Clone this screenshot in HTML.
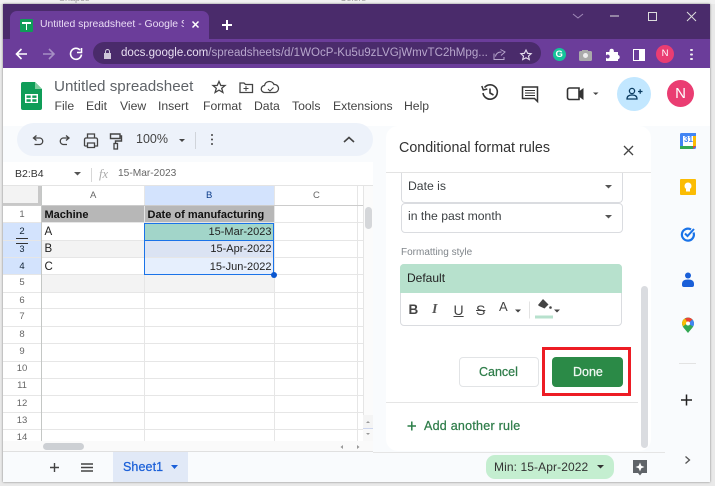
<!DOCTYPE html>
<html><head><meta charset="utf-8"><style>
html,body{margin:0;padding:0}
body{width:715px;height:486px;overflow:hidden;position:relative;background:#e9e9e9;font-family:"Liberation Sans",sans-serif;color:#3c4043}
.a{position:absolute}
.t{position:absolute;white-space:nowrap;line-height:1}
.h{position:absolute;background:#e6e6e6}
.rn{position:absolute;left:3px;width:38px;text-align:center;font-size:9.5px;color:#666;line-height:17px;height:17px}
.cell{position:absolute;font-size:11px;line-height:17px;height:17px;white-space:nowrap;color:#222}
.m{-webkit-text-stroke:.25px currentColor}
svg{position:absolute;overflow:visible}
</style></head><body>
<div class="a" style="left:0;top:0;width:715px;height:4px;background:#f1f1f1"></div>
<div class="t" style="left:59px;top:-6px;font-size:9px;color:#999">Shapes</div>
<div class="t" style="left:340px;top:-6px;font-size:9px;color:#999">Colors</div>
<div class="a" style="left:3px;top:4px;width:707px;height:478px;background:#f9fbfd;box-shadow:0 0 2px #777"></div>
<!-- tab strip -->
<div class="a" style="left:3px;top:4px;width:707px;height:35px;background:#4a2b6b"></div>
<div class="a" style="left:10px;top:11px;width:199px;height:28px;background:#6b3d9a;border-radius:7px 7px 0 0"></div>
<div class="a" style="left:20px;top:19px;width:13px;height:13px;background:#0f9d58;border-radius:1px"></div>
<div class="a" style="left:22px;top:22px;width:9px;height:1.5px;background:#fff"></div>
<div class="a" style="left:25.5px;top:22px;width:1.5px;height:8px;background:#fff"></div>
<div class="t" style="left:40px;top:20px;font-size:10.4px;color:#eadcf5;width:144px;overflow:hidden">Untitled spreadsheet - Google Sh</div>
<svg style="left:0;top:0" width="715" height="70" fill="none" stroke="#fff" stroke-width="1.5">
<path d="M192.500 21.500l6 6M198.500 21.500l-6 6"/>
<path d="M222 25h10M227 20v10" stroke-width="2"/>
<path d="M573 14l5 4 5-4" stroke="#a08ab8" stroke-width="1"/>
<path d="M610 16h9" stroke="#ddd" stroke-width="1"/>
<rect x="648.500" y="12.500" width="8" height="8" stroke="#ddd" stroke-width="1"/>
<path d="M687 12l9 9M696 12l-9 9" stroke="#ddd" stroke-width="1"/>
</svg>
<!-- toolbar -->
<div class="a" style="left:3px;top:39px;width:707px;height:29px;background:#6b3d9a"></div>
<div class="a" style="left:93px;top:42px;width:448px;height:22px;background:#4a2b6b;border-radius:11px"></div>
<svg style="left:0;top:0" width="715" height="70" fill="none" stroke="#fff" stroke-width="1.600">
<path d="M27 54H17M21.500 49l-5 5 5 5"/>
<path d="M43 54h10M49 49l5 5-5 5" stroke="#a68fc4"/>
<path d="M80 50a5.500 5.500 0 1 0 1.500 4.500M81.500 48v4.500H77"/>
<rect x="104" y="53" width="7" height="6" fill="#cfc6da" stroke="none"/>
<path d="M105.500 53v-1.500a2 2 0 0 1 4 0V53" stroke="#cfc6da" stroke-width="1"/>
<path d="M494 53.500v6h10v-2.500M495.500 56.500c.5-3 2.500-4.500 6-4.500M500.500 49.500l4.500 2.500-4 3.500" stroke="#b7a6cc" stroke-width="1"/>
<path d="M526 50l1.600 3.300 3.600.4-2.700 2.400.8 3.500-3.300-1.800-3.300 1.800.8-3.500-2.700-2.400 3.600-.4z" stroke="#e8e0f0" stroke-width="1.100"/>
</svg>
<div class="t" style="left:121px;top:48px;font-size:11.550px;color:#e8dff2">docs.google.com<span style="color:#b7a6cc">/spreadsheets/d/1WOcP-Ku5u9zLVGjWmvTC2hMpg...</span></div>
<div class="a" style="left:552.500px;top:47.500px;width:13px;height:13px;border-radius:50%;background:#15c39a"></div>
<div class="t" style="left:555.500px;top:49.500px;font-size:9.500px;font-weight:bold;color:#fff">G</div>
<div class="a" style="left:579px;top:51px;width:13px;height:9.500px;background:#aaa;border-radius:1.500px"></div>
<div class="a" style="left:582px;top:49.500px;width:6px;height:2px;background:#aaa"></div>
<div class="a" style="left:583px;top:53px;width:5px;height:5px;background:#eee;border-radius:50%"></div>
<svg style="left:606px;top:48px" width="14" height="13"><path d="M0 4h3.500a2 2 0 0 1 0-1.500 2.200 2.200 0 0 1 4.300 0 2 2 0 0 1 0 1.500H12v3a2.200 2.200 0 0 1 0 4.300V13H0V9.500a2 2 0 1 0 0-2z" fill="#fff"/></svg>
<div class="a" style="left:633px;top:49px;width:12px;height:11.500px;border:1.300px solid #fff;background:linear-gradient(90deg,#6b3d9a 50%,#fff 50%);box-sizing:border-box"></div>
<div class="a" style="left:656px;top:45px;width:18px;height:18px;border-radius:50%;background:#ea3d72;color:#fff;font-size:9.500px;line-height:18px;text-align:center">N</div>
<div class="a" style="left:690px;top:48.500px;width:2.500px;height:2.500px;background:#eee;border-radius:50%;box-shadow:0 4.500px 0 #eee,0 9px 0 #eee"></div>
<!-- docs header -->
<div class="a" style="left:3px;top:68px;width:707px;height:58px;background:#fff"></div>
<svg style="left:21px;top:82px" width="21" height="28"><path d="M2 0h12l7 7v19a2 2 0 0 1-2 2H2a2 2 0 0 1-2-2V2a2 2 0 0 1 2-2z" fill="#0f9d58"/><path d="M14 0v7h7z" fill="#7fce9f"/><path d="M4 12h13v9H4z" fill="#fff"/><path d="M5.500 13.500h4.200v2.400H5.500zM11.300 13.500h4.200v2.400h-4.200zM5.500 17.300h4.200v2.400H5.500zM11.300 17.300h4.200v2.400h-4.200z" fill="#0f9d58"/></svg>
<div class="t" style="left:54px;top:79px;font-size:15.200px;color:#5f6368">Untitled spreadsheet</div>
<div class="t" style="left:54.500px;top:100px;font-size:12.200px;color:#444">File</div>
<div class="t" style="left:86px;top:100px;font-size:12.200px;color:#444">Edit</div>
<div class="t" style="left:120px;top:100px;font-size:12.200px;color:#444">View</div>
<div class="t" style="left:158px;top:100px;font-size:12.200px;color:#444">Insert</div>
<div class="t" style="left:203px;top:100px;font-size:12.200px;color:#444">Format</div>
<div class="t" style="left:254px;top:100px;font-size:12.200px;color:#444">Data</div>
<div class="t" style="left:292px;top:100px;font-size:12.200px;color:#444">Tools</div>
<div class="t" style="left:333px;top:100px;font-size:12.200px;color:#444">Extensions</div>
<div class="t" style="left:404px;top:100px;font-size:12.200px;color:#444">Help</div>
<svg style="left:0;top:0" width="715" height="130" fill="none" stroke="#444" stroke-width="1.300">
<path d="M219 81.500l1.800 4h4.200l-3.300 2.800 1.200 4.200-3.900-2.400-3.900 2.400 1.200-4.200-3.300-2.800h4.200z"/>
<path d="M240 92.500V83h4l1.500 1.500H252.500v8z"/><path d="M243.500 88.500h5M246 86v5" stroke-width="1"/>
<path d="M269 92.500h-4a3.500 3.500 0 0 1-.5-7 5 5 0 0 1 9.500-1 4 4 0 0 1 1 8z"/><path d="M268 89l2 2 3.500-3.500" stroke-width="1"/>
<path d="M484.500 87.500A7.200 7.200 0 1 1 483 93" stroke="#333" stroke-width="1.600"/><path d="M481.800 86l1.500 4 4-1" stroke="#333" stroke-width="1.500"/><path d="M490 88.500v4.500l3.500 2" stroke="#333" stroke-width="1.600"/>
<path d="M522.500 87h15v14.500l-3-3h-12z" stroke="#333" stroke-width="1.500"/><path d="M525 90.500h10M525 93h10M525 95.500h10" stroke="#333" stroke-width="1.100"/>
<path d="M567.500 90a2 2 0 0 1 2-2h9.500v11.500h-9.500a2 2 0 0 1-2-2z" stroke="#333" stroke-width="1.600"/><path d="M579 92l4-3v10l-4-3z" fill="#333" stroke="#333" stroke-width="1"/>
<path d="M593 92.500h5.500l-2.750 2.500z" fill="#444" stroke="none"/>
</svg>
<div class="a" style="left:617px;top:77px;width:34px;height:34px;border-radius:50%;background:#c2e7ff"></div>
<svg style="left:626px;top:87px" width="17" height="14" fill="none" stroke="#0b3c61" stroke-width="1.300"><circle cx="6" cy="4" r="2.600"/><path d="M1 12c0-3 2-4 5-4s5 1 5 4z"/><path d="M12 4.500h4.500M14.200 2.200v4.600"/></svg>
<div class="a" style="left:667px;top:80px;width:27px;height:27px;border-radius:50%;background:#ea3d72;color:#fff;font-size:15px;line-height:27px;text-align:center">N</div>
<!-- format toolbar -->
<div class="a" style="left:17px;top:123px;width:356px;height:33px;border-radius:17px;background:#edf2fa"></div>
<svg style="left:0;top:120px" width="380" height="40" fill="none" stroke="#444" stroke-width="1.300">
<path d="M36.500 15.500L33.500 18l3 2.500M33.500 18H40a3.300 3.300 0 0 1 0 6.500H34.500"/>
<path d="M66 15.500l3 2.500-3 2.500M69 18H63a3.300 3.300 0 0 0 0 6.500H67"/>
<path d="M84.500 26v-6.500a1.500 1.500 0 0 1 1.500-1.500h10a1.500 1.500 0 0 1 1.500 1.500V26h-2.500M87 26h-2.500M87.500 18v-4h7v4M87.500 23h7v4.500h-7z"/>
<path d="M110.500 14h9.500v4.500h-9.500zM120 16h1.500v5h-6v2.500" stroke-width="1.400"/><rect x="114" y="23.500" width="3.500" height="5.500" stroke-width="1.300"/>
<path d="M179 19h6l-3 3z" fill="#444" stroke="none"/>
<path d="M195.500 12v17" stroke="#d0d4da" stroke-width="1"/>
<path d="M344 22l5-4.500 5 4.500" stroke-width="1.600"/>
</svg>
<div class="t" style="left:136px;top:133px;font-size:12.500px;color:#444">100%</div>
<div class="a" style="left:210.500px;top:133.500px;width:2.500px;height:2.500px;background:#444;border-radius:50%;box-shadow:0 4.500px 0 #444,0 9px 0 #444"></div>
<!-- formula bar -->
<div class="a" style="left:3px;top:162px;width:370px;height:24px;background:#fff;border-bottom:1px solid #e4e4e4;box-sizing:border-box"></div>
<div class="t" style="left:15px;top:168.500px;font-size:10.500px;color:#333">B2:B4</div>
<svg style="left:74px;top:172px" width="8" height="5"><path d="M0 0h7L3.500 3.500z" fill="#555"/></svg>
<div class="h" style="left:91px;top:168px;width:1px;height:14px;background:#d8d8d8"></div>
<div class="t" style="left:99px;top:168px;font-size:12.500px;font-style:italic;font-family:'Liberation Serif',serif;color:#aaa">fx</div>
<div class="t" style="left:118px;top:168.500px;font-size:10.200px;color:#666">15-Mar-2023</div>
<!-- grid -->
<div class="a" style="left:3px;top:186px;width:360px;height:255px;background:#fff"></div>
<div class="a" style="left:3px;top:186px;width:38px;height:20px;background:#f3f3f3;border-right:3px solid #c8c8c8;border-bottom:3px solid #c8c8c8;box-sizing:border-box"></div>
<div class="a" style="left:144.500px;top:186px;width:129.500px;height:19px;background:#d3e3fd"></div>
<div class="a" style="left:3px;top:222.700px;width:38px;height:52px;background:#d3e3fd"></div>
<div class="t" style="left:90px;top:191px;font-size:9.500px;color:#666">A</div>
<div class="t" style="left:206px;top:191px;font-size:9.500px;color:#0b3c8a">B</div>
<div class="t" style="left:313px;top:191px;font-size:9.500px;color:#666">C</div>
<div class="a" style="left:41.500px;top:205.300px;width:103px;height:17.300px;background:#b7b7b7"></div>
<div class="a" style="left:144.500px;top:205.300px;width:129.500px;height:17.300px;background:#b7b7b7"></div>
<div class="a" style="left:41.500px;top:240px;width:103px;height:17.300px;background:#f3f3f3"></div>
<div class="a" style="left:41.500px;top:274.700px;width:232.500px;height:17px;background:#f3f3f3"></div>
<div class="a" style="left:144.500px;top:222.700px;width:129.500px;height:17.300px;background:#a2d5c9"></div>
<div class="a" style="left:144.500px;top:240px;width:129.500px;height:17.300px;background:#dbe3f3"></div>
<div class="a" style="left:144.500px;top:257.300px;width:129.500px;height:17.400px;background:#e6effd"></div>
<!-- grid lines -->
<div class="h" style="left:3px;top:222px;width:360px;height:1px"></div>
<div class="h" style="left:3px;top:239.500px;width:360px;height:1px"></div>
<div class="h" style="left:3px;top:257px;width:360px;height:1px"></div>
<div class="h" style="left:3px;top:274px;width:360px;height:1px"></div>
<div class="h" style="left:3px;top:291.500px;width:360px;height:1px"></div>
<div class="h" style="left:3px;top:308px;width:360px;height:1px"></div>
<div class="h" style="left:3px;top:326px;width:360px;height:1px"></div>
<div class="h" style="left:3px;top:343px;width:360px;height:1px"></div>
<div class="h" style="left:3px;top:360.500px;width:360px;height:1px"></div>
<div class="h" style="left:3px;top:377.500px;width:360px;height:1px"></div>
<div class="h" style="left:3px;top:395px;width:360px;height:1px"></div>
<div class="h" style="left:3px;top:412px;width:360px;height:1px"></div>
<div class="h" style="left:3px;top:429px;width:360px;height:1px"></div>
<div class="h" style="left:41px;top:186px;width:1px;height:255px;background:#c4c7c5"></div>
<div class="h" style="left:144px;top:186px;width:1px;height:255px"></div>
<div class="h" style="left:274px;top:186px;width:1px;height:255px"></div>
<div class="h" style="left:357px;top:186px;width:1px;height:255px"></div>
<div class="h" style="left:3px;top:205px;width:360px;height:1px;background:#ccc"></div>
<div class="cell" style="left:44.500px;top:206.500px;font-weight:bold;color:#111">Machine</div>
<div class="cell" style="left:147.500px;top:206.500px;font-weight:bold;color:#111">Date of manufacturing</div>
<div class="cell" style="left:44.500px;top:224px;font-size:11.500px">A</div>
<div class="cell" style="left:44.500px;top:241px;font-size:11.500px">B</div>
<div class="cell" style="left:44.500px;top:258.500px;font-size:11.500px">C</div>
<div class="cell" style="left:144px;width:127.500px;text-align:right;top:224px">15-Mar-2023</div>
<div class="cell" style="left:144px;width:127.500px;text-align:right;top:241px">15-Apr-2022</div>
<div class="cell" style="left:144px;width:127.500px;text-align:right;top:258.500px">15-Jun-2022</div>
<div class="a" style="left:144px;top:222.500px;width:130px;height:52.500px;border:1px solid #1a73e8;box-sizing:border-box"></div>
<div class="a" style="left:144px;top:222.500px;width:130px;height:18px;border:1px solid #1a73e8;box-sizing:border-box"></div>
<div class="a" style="left:270.500px;top:271.500px;width:6px;height:6px;background:#0b57d0;border-radius:50%"></div>
<div class="rn" style="top:205.500px">1</div>
<div class="rn" style="top:222.500px;color:#123">2</div>
<div class="rn" style="top:241px;color:#123;font-size:9px">3</div>
<div class="rn" style="top:257.500px;color:#123">4</div>
<div class="a" style="left:16px;top:237.500px;width:12px;height:1.500px;background:#333"></div>
<div class="a" style="left:16px;top:242.500px;width:12px;height:1.500px;background:#333"></div>
<div class="rn" style="top:274px">5</div>
<div class="rn" style="top:291.500px">6</div>
<div class="rn" style="top:308px">7</div>
<div class="rn" style="top:325.500px">8</div>
<div class="rn" style="top:342.500px">9</div>
<div class="rn" style="top:360px">10</div>
<div class="rn" style="top:377px">11</div>
<div class="rn" style="top:394.500px">12</div>
<div class="rn" style="top:411.500px">13</div>
<div class="rn" style="top:428.500px;height:12.500px;overflow:hidden">14</div>
<!-- v scrollbar -->
<div class="a" style="left:363px;top:186px;width:10px;height:255px;background:#fbfbfb;border-left:1px solid #e5e5e5;box-sizing:border-box"></div>
<div class="a" style="left:365px;top:207px;width:7px;height:22px;background:#d5d7da;border-radius:4px"></div>
<div class="a" style="left:363px;top:415px;width:10px;height:13px;background:#f4f4f4"></div>
<div class="a" style="left:363px;top:428px;width:10px;height:13px;background:#f8f8f8;border-top:1px solid #cdd6ee;box-sizing:border-box"></div>
<svg style="left:365px;top:420px" width="6" height="17"><path d="M1 3l2-2 2 2zM1 13l2 2 2-2z" fill="#999"/></svg>
<!-- h scrollbar -->
<div class="a" style="left:3px;top:441px;width:370px;height:11px;background:#fafafa;border-bottom:1px solid #e0e0e0;box-sizing:border-box"></div>
<div class="a" style="left:42.500px;top:442.500px;width:41px;height:7.500px;background:#cdd0d4;border-radius:4px"></div>
<svg style="left:340px;top:444px" width="30" height="8"><path d="M3 1v4L0.500 3zM17 1v4l2.500-2z" fill="#999"/></svg>
<!-- bottom bar -->
<div class="a" style="left:3px;top:452px;width:707px;height:30px;background:#f9fbfd"></div>
<svg style="left:0;top:452px" width="110" height="30" fill="none" stroke="#444" stroke-width="1.400"><path d="M50 15.500h9M54.500 11v9"/><path d="M81 12h12M81 15.500h12M81 19h12"/></svg>
<div class="a" style="left:113px;top:452px;width:75px;height:30px;background:#e1e9f7"></div>
<div class="t m" style="left:123px;top:461px;font-size:12.500px;color:#1a5fd8;letter-spacing:.1px">Sheet1</div>
<svg style="left:171px;top:465px" width="8" height="5"><path d="M0 0h7L3.500 4z" fill="#1a5fd8"/></svg>
<div class="a" style="left:486px;top:455px;width:128px;height:24px;border-radius:9px;background:#c4eed0"></div>
<div class="t" style="left:494px;top:461px;font-size:12px;color:#333;letter-spacing:.1px">Min: 15-Apr-2022</div>
<svg style="left:597px;top:465px" width="8" height="5"><path d="M0 0h7L3.500 3.500z" fill="#333"/></svg>
<svg style="left:632px;top:459px" width="16" height="18"><path d="M1 1h14v13h-5l-2 2.500L6 14H1z" fill="#5f6368"/><path d="M8 3.500l1.300 3.200 3.200 1.300-3.200 1.300L8 12.500 6.700 9.300 3.500 8l3.200-1.300z" fill="#fff"/></svg>
<!-- panel -->
<div class="a" style="left:386px;top:126px;width:265px;height:325px;background:#fff;border-radius:12px"></div>
<div class="t" style="left:399px;top:141px;font-size:14.300px;color:#333">Conditional format rules</div>
<svg style="left:623px;top:145px" width="11" height="11" fill="none" stroke="#444" stroke-width="1.300"><path d="M1 1l9 9M10 1l-9 9"/></svg>
<div class="a" style="left:386px;top:172px;width:265px;height:1px;background:#e3e3e3"></div>
<div class="a" style="left:401px;top:173px;width:222px;height:30px;border:1px solid #dadce0;border-top:0;border-radius:0 0 4px 4px;box-sizing:border-box;background:#fff"></div>
<div class="t" style="left:408px;top:180px;font-size:12.200px;color:#3c4043">Date is</div>
<svg style="left:605px;top:185px" width="8" height="5"><path d="M0 0h7L3.500 3.500z" fill="#555"/></svg>
<div class="a" style="left:401px;top:202.500px;width:222px;height:30px;border:1px solid #dadce0;border-radius:4px;box-sizing:border-box;background:#fff"></div>
<div class="t" style="left:408px;top:210px;font-size:12.200px;color:#3c4043">in the past month</div>
<svg style="left:605px;top:215px" width="8" height="5"><path d="M0 0h7L3.500 3.500z" fill="#555"/></svg>
<div class="t" style="left:401px;top:247.500px;font-size:10px;color:#80868b">Formatting style</div>
<div class="a" style="left:400px;top:264px;width:222px;height:62px;border:1px solid #dadce0;border-radius:4px;box-sizing:border-box;background:#fff"></div>
<div class="a" style="left:400px;top:264px;width:221.500px;height:29px;background:#b7e1cd;border-radius:4px 4px 0 0"></div>
<div class="t" style="left:407px;top:272px;font-size:12px;color:#222">Default</div>
<div class="t" style="left:408.500px;top:303px;font-size:13.500px;font-weight:bold;color:#444">B</div>
<div class="t" style="left:432px;top:303px;font-size:14px;font-style:italic;font-weight:bold;color:#555;font-family:'Liberation Serif',serif">I</div>
<div class="t" style="left:453.500px;top:302.500px;font-size:14px;color:#444;text-decoration:underline">U</div>
<div class="t" style="left:476px;top:303px;font-size:14px;color:#444;text-decoration:line-through">S</div>
<div class="t" style="left:499px;top:300px;font-size:13px;color:#444">A</div>
<svg style="left:0;top:295px" width="620" height="32" fill="none"><path d="M515 14.500h6l-3 3zM554 14.500h6l-3 3z" fill="#444"/><path d="M529.500 6.500v17" stroke="#e3e3e3"/><path d="M543 4l5.500 5.500-4 4-5.500-2.500-1-1z" fill="#444"/><circle cx="550.500" cy="12.500" r="1.300" fill="#444"/><path d="M535 22h18" stroke="#b7e1cd" stroke-width="3"/></svg>
<!-- panel scrollbar -->
<div class="a" style="left:641px;top:286px;width:7px;height:162px;background:#dadce0;border-radius:4px"></div>
<!-- buttons -->
<div class="a" style="left:458.500px;top:357px;width:80px;height:30px;border:1px solid #e2e4e6;border-radius:4px;box-sizing:border-box;background:#fff"></div>
<div class="t m" style="left:479px;top:365.500px;font-size:12.500px;color:#2f7d4a">Cancel</div>
<div class="a" style="left:542px;top:347px;width:89px;height:49px;border:3px solid #ed1c24;box-sizing:border-box"></div>
<div class="a" style="left:552px;top:357px;width:71px;height:30px;background:#2b8a47;border-radius:4px"></div>
<div class="t m" style="left:573px;top:365.500px;font-size:12.500px;color:#f1f8f3">Done</div>
<div class="a" style="left:386px;top:402px;width:252px;height:1px;background:#e5e5e5"></div>
<svg style="left:407px;top:421px" width="10" height="10" fill="none" stroke="#2b7f48" stroke-width="1.500"><path d="M0.500 5h8.500M4.800 .5v9"/></svg>
<div class="t m" style="left:424px;top:420px;font-size:12.500px;color:#2f7d4a;letter-spacing:.25px">Add another rule</div>
<div class="a" style="left:373px;top:451.500px;width:292px;height:1px;background:#e5e5e5"></div>
<!-- right rail -->
<svg style="left:680px;top:133px" width="16" height="16"><rect width="16" height="16" rx="1.500" fill="#4285f4"/><rect x="3" y="3" width="10" height="10" fill="#fff"/><rect y="13" width="13" height="3" fill="#34a853"/><rect x="13" y="3" width="3" height="10" fill="#fbbc04"/><rect x="3" width="13" height="3" fill="#4285f4"/><path d="M13 13h3l-3 3z" fill="#ea4335"/></svg>
<div class="t" style="left:684px;top:136px;font-size:8px;font-weight:bold;color:#4285f4">31</div>
<svg style="left:680px;top:179px" width="16" height="16"><rect width="16" height="16" rx="1" fill="#fbbc04"/><circle cx="8" cy="7" r="3.500" fill="#fff"/><rect x="6" y="10" width="4" height="2.500" fill="#fff"/></svg>
<svg style="left:680px;top:226px" width="16" height="16" fill="none" stroke="#1a73e8" stroke-width="2.200"><path d="M13.500 6.500a6 6 0 1 1-2.500-3"/><path d="M5 7.500l2.500 2.500 6.500-7" stroke-width="2"/></svg>
<svg style="left:681px;top:272px" width="14" height="16" fill="#1a5fd8"><circle cx="7" cy="3.500" r="3"/><path d="M1 12c0-3 2-4.500 6-4.500s6 1.500 6 4.500v1a2 2 0 0 1-2 2H3a2 2 0 0 1-2-2z"/></svg>
<svg style="left:682px;top:318px" width="12" height="16"><path d="M6 15C3 11 0 9 0 5.500a6 6 0 0 1 12 0C12 9 9 11 6 15z" fill="#34a853"/><path d="M0 5.500a6 6 0 0 1 3-5l3 4-5 4z" fill="#fbbc04"/><path d="M3 .5a6 6 0 0 1 7.500 1L6 5.500z" fill="#ea4335"/><path d="M10.500 1.500A6 6 0 0 1 12 5.500c0 1-.3 2-.8 3L6 5.500z" fill="#4285f4"/><circle cx="6" cy="5.500" r="2" fill="#fff"/></svg>
<div class="a" style="left:679px;top:363px;width:17px;height:1px;background:#e3e3e3"></div>
<svg style="left:681px;top:394px" width="12" height="12" fill="none" stroke="#222" stroke-width="1.500"><path d="M0 6h11M5.500 .5v11"/></svg>
<svg style="left:684px;top:455px" width="7" height="10" fill="none" stroke="#555" stroke-width="1.300"><path d="M1.500 1.500l4 3.500-4 3.500"/></svg>
</body></html>
